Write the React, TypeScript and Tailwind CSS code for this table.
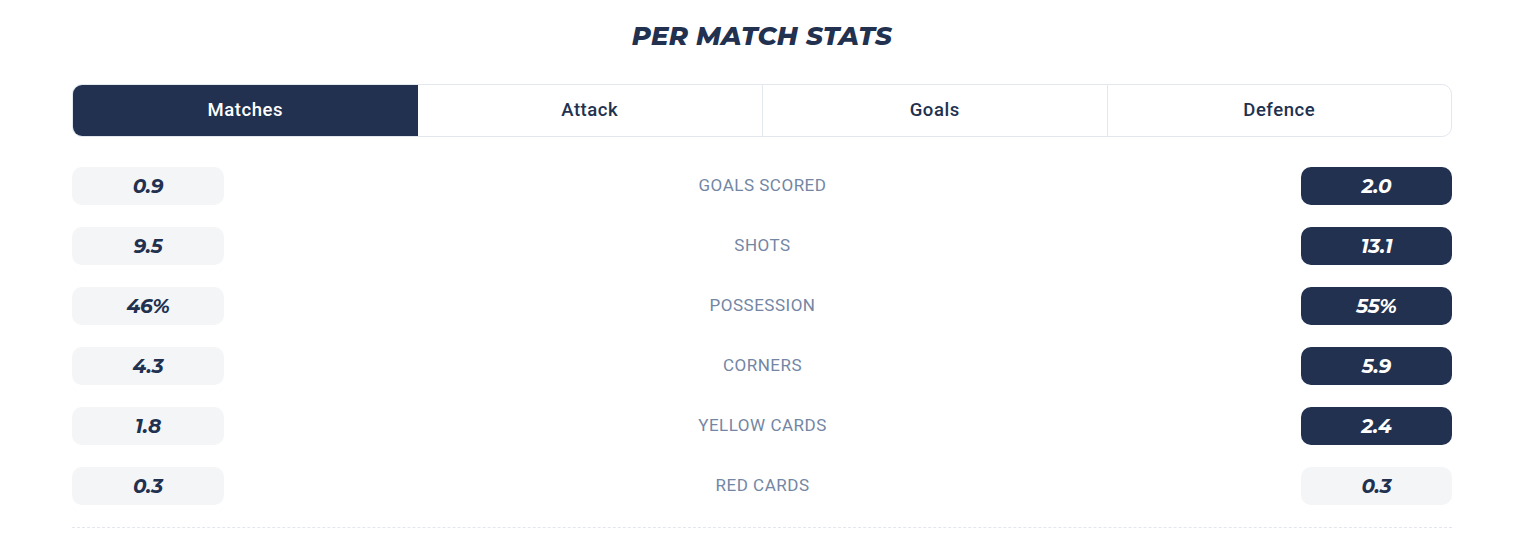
const TABS = ['Matches', 'Attack', 'Goals', 'Defence']

interface StatRow {
  label: string
  home: string
  away: string
  highlight: 'home' | 'away' | 'none'
}

const ROWS: StatRow[] = [
  { label: 'GOALS SCORED', home: '0.9', away: '2.0', highlight: 'away' },
  { label: 'SHOTS', home: '9.5', away: '13.1', highlight: 'away' },
  { label: 'POSSESSION', home: '46%', away: '55%', highlight: 'away' },
  { label: 'CORNERS', home: '4.3', away: '5.9', highlight: 'away' },
  { label: 'YELLOW CARDS', home: '1.8', away: '2.4', highlight: 'away' },
  { label: 'RED CARDS', home: '0.3', away: '0.3', highlight: 'none' },
]

const numFont = { fontFamily: 'Montserrat, Inter, "Open Sans", sans-serif' }

const Pill = ({ value, dark }: { value: string; dark: boolean }) => (
  <div
    style={numFont}
    className={`h-[38px] rounded-[10px] flex items-center justify-center text-[20px] font-bold italic tracking-[-0.01em] ${
      dark ? 'bg-[#21314f] text-white' : 'bg-[#f4f5f7] text-[#21314f]'
    }`}
  >
    {value}
  </div>
)

export default function App() {
  return (
    <div className="bg-white w-[1538px] h-[540px] pt-[20px] font-['Roboto',sans-serif]">
      <div className="w-[1380px] ml-[72px]">
        <h2
          style={numFont}
          className="text-center text-[26px] leading-[32px] font-extrabold italic text-[#21314f] tracking-[0.01em]"
        >
          PER MATCH STATS
        </h2>

        <div className="mt-[32px] grid grid-cols-4 h-[53px] rounded-[10px] border border-[#e3e8ef] overflow-hidden">
          {TABS.map((tab, i) => (
            <div
              key={tab}
              className={`flex items-center justify-center text-[18.5px] font-medium tracking-[0.03em] ${
                i === 0 ? 'bg-[#21314f] text-white' : 'text-[#21314f]'
              } ${i > 1 ? 'border-l border-[#e3e8ef]' : ''}`}
            >
              {tab}
            </div>
          ))}
        </div>

        <div className="mt-[30px] flex flex-col gap-[22px]">
          {ROWS.map((row) => (
            <div key={row.label} className="grid grid-cols-[152px_1fr_151px] items-center">
              <Pill value={row.home} dark={row.highlight === 'home'} />
              <div className="text-center text-[17px] tracking-[0.03em] text-[#7386a4]">{row.label}</div>
              <Pill value={row.away} dark={row.highlight === 'away'} />
            </div>
          ))}
        </div>

        <div className="mt-[22px] border-t border-dashed border-[#e3e6ea]" />
      </div>
    </div>
  )
}
